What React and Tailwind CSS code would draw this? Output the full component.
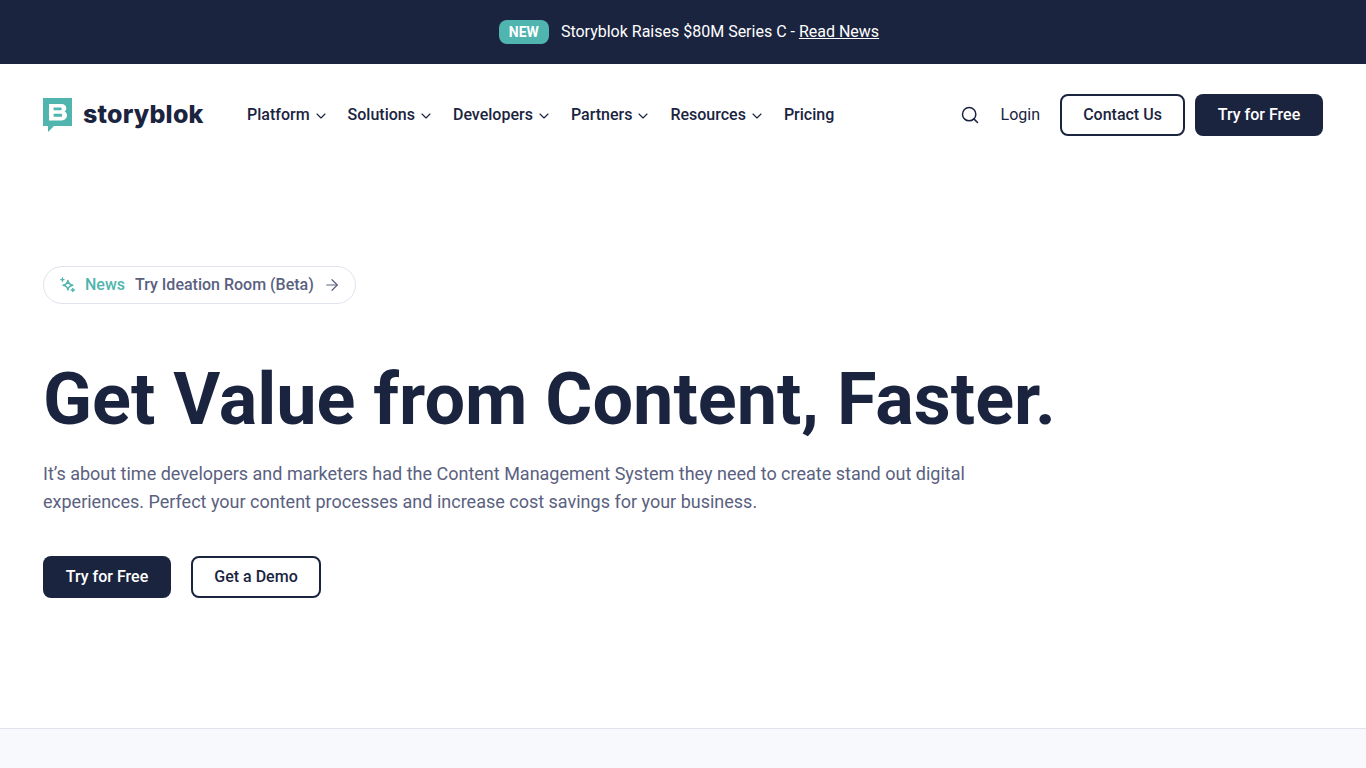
import React from "react";
import { ChevronDown, Search, ArrowRight } from "lucide-react";

const items = ["Platform", "Solutions", "Developers", "Partners", "Resources"];

export default function App() {
  return (
    <div className="h-[768px] overflow-hidden bg-white font-['Roboto',sans-serif] text-[#1b243f]">
      <div className="flex h-16 items-center justify-center bg-[#1b243f] pl-3 text-white">
        <span className="mr-3 flex h-6 w-[50px] items-center justify-center rounded-lg bg-[#4fb5ae] text-sm font-bold leading-none">NEW</span>
        <span className="text-base">Storyblok Raises $80M Series C - <a className="underline">Read News</a></span>
      </div>

      <header className="flex h-[102px] items-center px-[43px]">
        <div className="flex w-[204px] items-center">
          <svg width="29" height="35" viewBox="0 0 29 35" className="mr-[11px] shrink-0">
            <path d="M0 0H29V28H11L5 34V28H0Z" fill="#4fb5ae" />
            <path fillRule="evenodd" d="M6 6H18.5C21.5 6 23.3 7.8 23.3 10.3C23.3 11.8 22.6 12.9 21.6 13.6C23.1 14.3 24 15.6 24 17.3C24 20 22 22.5 18.5 22.5H6ZM10.6 9.6V12.2H17.4C18.2 12.2 18.7 11.6 18.7 10.9C18.7 10.2 18.2 9.6 17.4 9.6ZM10.6 15.7V18.8H17.8C18.6 18.8 19.2 18.1 19.2 17.2C19.2 16.4 18.6 15.7 17.8 15.7Z" fill="#fff" />
          </svg>
          <span className="relative -top-[1px] font-['Inter',sans-serif] text-[25px] font-extrabold leading-none tracking-[0.2px]">storyblok</span>
        </div>
        <nav className="flex items-center gap-[19px] text-base font-medium">
          {items.map((t) => (
            <a key={t} className="flex items-center gap-[3px]">
              {t}
              <ChevronDown size={16} strokeWidth={1.7} className="mt-[2px]" />
            </a>
          ))}
          <a>Pricing</a>
        </nav>
        <div className="ml-auto flex items-center">
          <Search size={20} strokeWidth={1.8} className="mr-[21px]" />
          <a className="mr-5 text-base">Login</a>
          <a className="mr-[10px] flex h-[42px] w-[125px] items-center justify-center rounded-lg border-2 border-[#1b243f] text-base font-medium">Contact Us</a>
          <a className="flex h-[42px] w-[128px] items-center justify-center rounded-lg bg-[#1b243f] text-base font-medium text-white">Try for Free</a>
        </div>
      </header>

      <main className="h-[563px] border-b border-[#dfe3ec] px-[43px] pt-[100px]">
        <a className="flex h-[38px] w-[313px] items-center rounded-full border border-[#dfe3ec] pl-4 text-base font-medium">
          <svg width="16" height="16" viewBox="0 0 16 16" fill="none" stroke="#4fb5ae" strokeWidth="1.4" strokeLinecap="round" strokeLinejoin="round" className="mr-[9px]">
            <path d="M7.9 3.4C8.3 6.6 9.4 7.7 12.8 8.2C9.4 8.7 8.3 9.8 7.9 13C7.5 9.8 6.4 8.7 3 8.2C6.4 7.7 7.5 6.6 7.9 3.4Z" />
            <path d="M2.4 1V4.2M0.8 2.6H4" />
            <path d="M12.8 11.4V14.6M11.2 13H14.4" />
          </svg>
          <span className="mr-[10px] text-[#4fb5ae]">News</span>
          <span className="text-[#5a6180]">Try Ideation Room (Beta)</span>
          <ArrowRight size={18} strokeWidth={1.6} className="ml-[9px] text-[#5a6180]" />
        </a>
        <h1 className="mt-[54px] text-[72px] font-bold leading-[84px]">Get Value from Content, Faster.</h1>
        <p className="mt-[18px] w-[960px] text-lg leading-7 text-[#5a6180]">
          It’s about time developers and marketers had the Content Management System they need to create stand out digital experiences. Perfect your content processes and increase cost savings for your business.
        </p>
        <div className="mt-[40px] flex gap-5">
          <a className="flex h-[42px] w-[128px] items-center justify-center rounded-lg bg-[#1b243f] text-base font-medium text-white">Try for Free</a>
          <a className="flex h-[42px] w-[130px] items-center justify-center rounded-lg border-2 border-[#1b243f] text-base font-medium">Get a Demo</a>
        </div>
      </main>
      <div className="h-10 bg-[#f7f9fd]" />
    </div>
  );
}
